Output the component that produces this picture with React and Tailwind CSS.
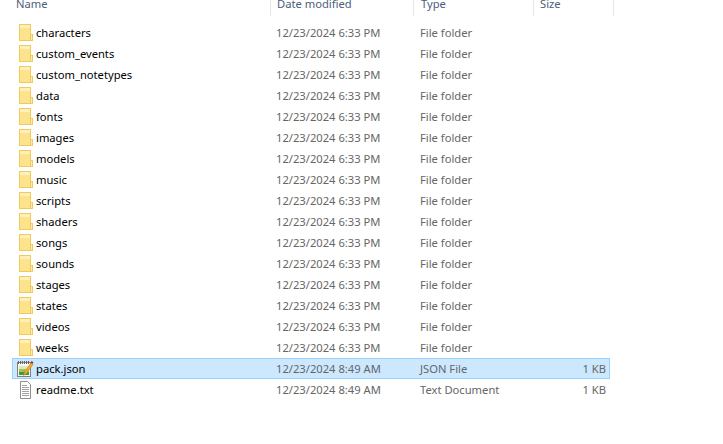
const folders = [
  'characters',
  'custom_events',
  'custom_notetypes',
  'data',
  'fonts',
  'images',
  'models',
  'music',
  'scripts',
  'shaders',
  'songs',
  'sounds',
  'stages',
  'states',
  'videos',
  'weeks',
];

const files = [
  { name: 'pack.json', date: '12/23/2024 8:49 AM', type: 'JSON File', size: '1 KB', selected: true },
  { name: 'readme.txt', date: '12/23/2024 8:49 AM', type: 'Text Document', size: '1 KB' },
];

function FolderIcon() {
  return (
    <svg width="16" height="17" viewBox="0 0 16 17" className="shrink-0">
      <rect x="1.500" y="0.500" width="11" height="16" fill="#fde48c" stroke="#eecb5c" />
      <rect x="2" y="1" width="10" height="3" fill="#fff0ba" />
      <rect x="12.500" y="10.500" width="2" height="6" fill="#fdeeb0" stroke="#eecb5c" />
    </svg>
  );
}

function JsonIcon() {
  return (
    <svg width="17" height="18" viewBox="1 0 17 18" className="shrink-0">
      <rect x="1.500" y="2.500" width="13" height="14" fill="#f7f7f7" stroke="#808080" />
      <path d="M2.500 1v3M4.500 1v3M6.500 1v3M8.500 1v3M10.500 1v3M12.500 1v3" stroke="#666" />
      <rect x="3" y="6" width="10" height="3" fill="#e2e8b8" />
      <rect x="3" y="9" width="10" height="3" fill="#9cc653" />
      <rect x="3" y="12" width="10" height="3" fill="#3f9c3a" />
      <path d="M7.500 15.500l1-3.500 6.500-9 2 1.500-6.500 9z" fill="#f2a92b" stroke="#b9791a" strokeWidth="0.500" />
      <path d="M15.500 1l2 1.300-1 1.700-2-1.400z" fill="#a8322a" />
    </svg>
  );
}

function TextIcon() {
  return (
    <svg width="16" height="18" viewBox="0 0 16 18" className="shrink-0">
      <path d="M2.500 0.500h7l3 3v14h-10z" fill="#fff" stroke="#8f8f8f" />
      <path d="M4 4.500h5M4 6.500h7M4 8.500h7M4 10.500h7M4 12.500h7M4 14.500h7" stroke="#a3a3a3" />
    </svg>
  );
}

function HeaderCell({ label, className }) {
  return (
    <div className={`h-[16px] border-r border-[#e5e5e5] ${className}`}>
      <span className="block -mt-[5px] leading-[18px]">{label}</span>
    </div>
  );
}

function Row({ icon, name, date, type, size, selected }) {
  return (
    <div
      className={`flex items-center h-[21px] border ${
        selected ? 'bg-[#cce8ff] border-[#99d1ff]' : 'border-transparent'
      }`}
    >
      <div className="w-[258px] flex items-center gap-[2px] pl-[4px] text-[#000000]">
        <span className="w-[17px] flex justify-center">{icon}</span>
        <span className="pt-[1px]">{name}</span>
      </div>
      <div className="w-[144px] pl-[5px] pt-[1px] text-[#666666]">{date}</div>
      <div className="w-[112px] pl-[5px] pt-[1px] text-[#666666]">{type}</div>
      <div className="w-[79px] pt-[1px] text-right text-[#666666]">{size}</div>
    </div>
  );
}

export default function App() {
  return (
    <div className="w-[723px] h-[444px] overflow-hidden bg-white text-[11.2px] font-['Noto_Sans',sans-serif]">
      <div className="flex text-[#4c607a] overflow-hidden">
        <HeaderCell label="Name" className="w-[271px] pl-[16px]" />
        <HeaderCell label="Date modified" className="w-[143px] pl-[6px]" />
        <HeaderCell label="Type" className="w-[120px] pl-[7px]" />
        <HeaderCell label="Size" className="w-[80px] pl-[6px]" />
      </div>
      <div className="w-[598px] ml-[12px] mt-[6px]">
        {folders.map((name) => (
          <Row
            key={name}
            icon={<FolderIcon />}
            name={name}
            date="12/23/2024 6:33 PM"
            type="File folder"
          />
        ))}
        {files.map((f) => (
          <Row
            key={f.name}
            icon={f.selected ? <JsonIcon /> : <TextIcon />}
            {...f}
          />
        ))}
      </div>
    </div>
  );
}
